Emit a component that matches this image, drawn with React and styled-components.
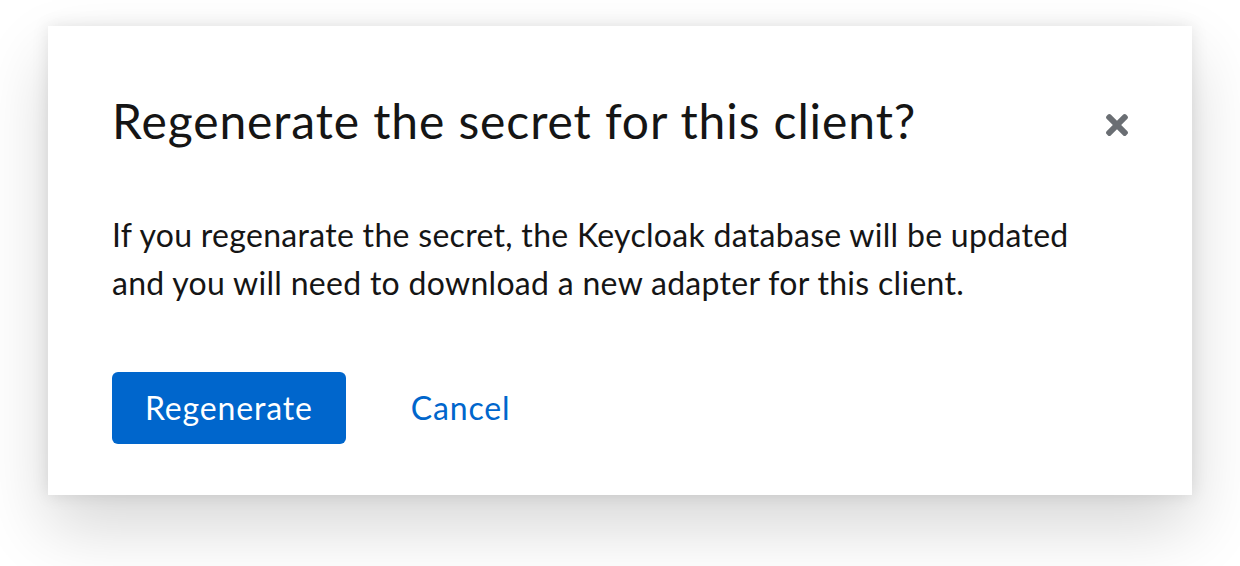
import React from "react";
import styled, { createGlobalStyle } from "styled-components";

const GlobalStyle = createGlobalStyle`
  html, body {
    margin: 0;
    padding: 0;
    background: #ffffff;
  }
  body {
    font-family: Lato, "Open Sans", sans-serif;
    color: #151515;
  }
`;

const Page = styled.div`
  height: 566px;
  padding: 26px 48px 0 48px;
  box-sizing: border-box;
  overflow: hidden;
`;

const Modal = styled.div`
  background: #ffffff;
  box-shadow: 0 32px 64px 0 rgba(3, 3, 3, 0.16), 0 0 16px 0 rgba(3, 3, 3, 0.1);
  padding: 64px 64px 51px 64px;
  display: flex;
  flex-direction: column;
`;

const Header = styled.div`
  display: flex;
  align-items: flex-start;
  justify-content: space-between;
`;

const Title = styled.h1`
  margin: 0;
  font-size: 48px;
  line-height: 62px;
  font-weight: 400;
  letter-spacing: 0.9px;
  color: #151515;
`;

const CloseButton = styled.button`
  border: 0;
  background: none;
  padding: 0;
  margin-top: 24px;
  width: 22px;
  height: 22px;
  display: flex;
  align-items: center;
  justify-content: center;
  cursor: pointer;
  color: #6a6e73;
`;

const Body = styled.p`
  margin: 59px 0 0 0;
  font-size: 32px;
  line-height: 48px;
  letter-spacing: 0.3px;
  color: #151515;
`;

const Footer = styled.div`
  display: flex;
  align-items: center;
  gap: 32px;
  margin-top: 65px;
`;

const Button = styled.button`
  font-family: inherit;
  font-size: 32px;
  line-height: 48px;
  letter-spacing: 0.85px;
  height: 72px;
  padding: 0 33px;
  border: 0;
  border-radius: 6px;
  cursor: pointer;
  background: ${(p) => (p.$variant === "primary" ? "#0066cc" : "transparent")};
  color: ${(p) => (p.$variant === "primary" ? "#ffffff" : "#0066cc")};
`;

const TimesIcon = () => (
  <svg width="22" height="32" viewBox="0 0 352 512" fill="currentColor" aria-hidden="true">
    <path d="M242.72 256l100.07-100.07c12.28-12.28 12.28-32.19 0-44.480l-22.24-22.24c-12.28-12.28-32.19-12.28-44.48 0L176 189.28 75.93 89.21c-12.28-12.28-32.19-12.28-44.48 0L9.21 111.45c-12.28 12.28-12.28 32.19 0 44.48L109.28 256 9.21 356.07c-12.28 12.28-12.28 32.19 0 44.48l22.24 22.24c12.28 12.28 32.2 12.28 44.48 0L176 322.72l100.07 100.07c12.28 12.28 32.2 12.28 44.48 0l22.24-22.24c12.28-12.28 12.28-32.19 0-44.48L242.72 256z" />
  </svg>
);

export default function App() {
  return (
    <>
      <GlobalStyle />
      <Page>
        <Modal role="dialog" aria-modal="true">
          <Header>
            <Title>Regenerate the secret for this client?</Title>
            <CloseButton aria-label="Close">
              <TimesIcon />
            </CloseButton>
          </Header>
          <Body>
            If you regenarate the secret, the Keycloak database will be updated
            <br />
            and you will need to download a new adapter for this client.
          </Body>
          <Footer>
            <Button $variant="primary">Regenerate</Button>
            <Button $variant="link">Cancel</Button>
          </Footer>
        </Modal>
      </Page>
    </>
  );
}
